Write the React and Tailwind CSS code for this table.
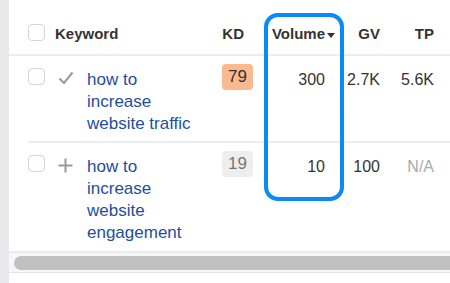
import React from 'react';

const rows = [
    {
        keyword: 'how to increase website traffic',
        added: true,
        kd: 79,
        kdClass: 'bg-[#fcb88f] text-[#333]',
        volume: '300',
        gv: '2.7K',
        tp: '5.6K',
    },
    {
        keyword: 'how to increase website engagement',
        added: false,
        kd: 19,
        kdClass: 'bg-[#eeeeef] text-[#777]',
        volume: '10',
        gv: '100',
        tp: 'N/A',
    },
];

function Checkbox() {
    return <div className="w-[17px] h-[17px] rounded-[4px] border border-[#d4d4d6] bg-white" />;
}

function CheckIcon() {
    return (
        <svg width="16" height="14" viewBox="0 0 16 14" fill="none" stroke="#9a9a9a" strokeWidth="2">
            <path d="M1.5 7.5l4.5 4.5L14.5 1.5" />
        </svg>
    );
}

function PlusIcon() {
    return (
        <svg width="15" height="15" viewBox="0 0 15 15" fill="none" stroke="#9a9a9a" strokeWidth="2">
            <path d="M7.5 0.5v14M0.5 7.5h14" />
        </svg>
    );
}

export default function App() {
    return (
        <div
            className="relative flex w-[450px] h-[283px] overflow-hidden bg-white text-[#333]"
            style={{ fontFamily: '"Liberation Sans", Arial, sans-serif' }}
        >
            {/* Left gutter */}
            <div className="w-[9px] shrink-0 bg-[#e9e9eb]" />

            <div className="flex-1 flex flex-col">
                {/* Header */}
                <div className="flex items-center h-[56px] pt-[14px] pl-[19px] border-b-2 border-[#ededee] text-[15px] font-bold">
                    <div className="w-[17px] -mt-[3px]"><Checkbox /></div>
                    <div className="w-[150px] pl-[10px]">Keyword</div>
                    <div className="w-[58px] text-right pr-[9px]">KD</div>
                    <div className="w-[82px] flex items-center justify-end gap-[2px]">
                        <span>Volume</span>
                        <span className="w-0 h-0 border-l-[4px] border-r-[4px] border-t-[5px] border-l-transparent border-r-transparent border-t-[#333] mt-[2px]" />
                    </div>
                    <div className="w-[45px] text-right">GV</div>
                    <div className="w-[54px] text-right">TP</div>
                </div>

                {/* Rows */}
                {rows.map((row, i) => (
                    <div
                        key={i}
                        className={`flex items-start pl-[19px] text-[16px] leading-[22px] pt-[13px] ${i === 0 ? 'pb-[6px]' : 'pb-[7px]'}`}
                    >
                        <div className="w-[17px] -mt-[1px]"><Checkbox /></div>
                        <div className="w-[29px] pl-[13px] pt-[2px]">
                            {row.added ? <CheckIcon /> : <PlusIcon />}
                        </div>
                        <div className="w-[121px] pl-[13px] pr-[2px] text-[17px] text-[#1d4ea2]">{row.keyword}</div>
                        <div className="w-[58px] flex justify-end -mt-[5px]">
                            <span className={`w-[31px] h-[26px] rounded-[4px] text-[17px] flex items-center justify-center ${row.kdClass}`}>
                                {row.kd}
                            </span>
                        </div>
                        <div className="w-[82px] text-right pr-[10px]">{row.volume}</div>
                        <div className="w-[45px] text-right">{row.gv}</div>
                        <div className={`w-[54px] text-right ${row.tp === 'N/A' ? 'text-[#aaa]' : ''}`}>{row.tp}</div>
                    </div>
                )).reduce((acc, el, i) => {
                    if (i > 0) acc.push(<div key={`sep-${i}`} className="ml-[19px] h-[2px] bg-[#ececed]" />);
                    acc.push(el);
                    return acc;
                }, [])}

                {/* Scrollbar */}
                <div className="border-t-2 border-[#ececed] bg-[#f7f7f7] h-[22px] pt-[3px] pl-[5px] border-b border-b-[#e6e6e6]">
                    <div className="h-[14px] rounded-l-full bg-[#c1c1c1]" />
                </div>
            </div>

            {/* Highlighted Volume column */}
            <div className="absolute left-[264px] top-[13px] w-[80px] h-[188px] rounded-[14px] border-[4px] border-[#0a8af6] pointer-events-none" />
        </div>
    );
}
